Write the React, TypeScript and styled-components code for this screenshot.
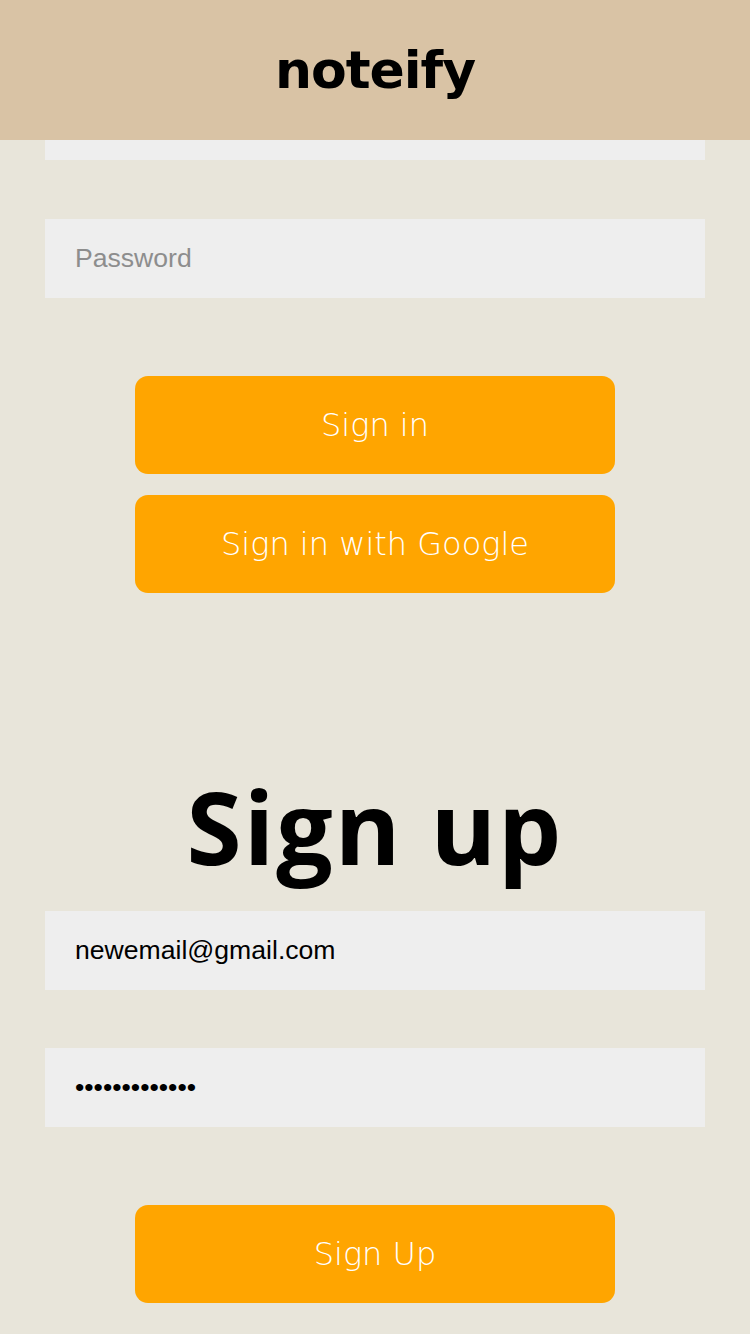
import React from "react";
import styled, { createGlobalStyle } from "styled-components";

const Global = createGlobalStyle`
  html, body { margin: 0; padding: 0; }
  body { background: #e8e5da; font-family: "DejaVu Sans", sans-serif; }
  * { box-sizing: border-box; }
`;

const Header = styled.header`
  position: fixed;
  top: 0;
  left: 0;
  right: 0;
  height: 140px;
  background: #d9c3a5;
  display: flex;
  align-items: center;
  justify-content: center;
  z-index: 10;
`;

const Logo = styled.h1`
  margin: 0;
  font-family: "DejaVu Sans", sans-serif;
  font-weight: 700;
  font-size: 52px;
  letter-spacing: -1px;
  color: #000;
`;

const Main = styled.main`
  width: 660px;
  margin: 0 auto;
  padding-top: 81px;
  display: flex;
  flex-direction: column;
`;

const Form = styled.form`
  display: flex;
  flex-direction: column;
  align-items: stretch;
`;

const Field = styled.input<{ $gap: number }>`
  display: block;
  width: 100%;
  height: 79px;
  border: none;
  outline: none;
  background: #eeeeee;
  padding: 0 30px;
  margin: 0 0 ${(p) => p.$gap}px;
  font-family: "Liberation Sans", Arial, sans-serif;
  font-size: 26.6px;
  color: #000;
  &::placeholder { color: #8d8d8d; }
`;

const Button = styled.button<{ $gap?: number }>`
  display: block;
  align-self: center;
  width: 480px;
  height: 98px;
  margin: 0 0 ${(p) => p.$gap ?? 0}px;
  border: none;
  border-radius: 13px;
  background: #ffa500;
  color: #fff;
  font-family: "DejaVu Sans", sans-serif;
  font-weight: 300;
  font-size: 32px;
  cursor: pointer;
`;

const Heading = styled.h2`
  margin: 168px 0 0;
  height: 150px;
  padding-bottom: 20px;
  display: flex;
  align-items: center;
  justify-content: center;
  font-family: "Open Sans", sans-serif;
  font-weight: 700;
  font-size: 100px;
  letter-spacing: 2px;
  color: #000;
`;

export default function App() {
  return (
    <>
      <Global />
      <Header>
        <Logo>noteify</Logo>
      </Header>
      <Main>
        <Form onSubmit={(e) => e.preventDefault()}>
          <Field $gap={59} type="email" placeholder="Email" readOnly />
          <Field $gap={78} type="password" placeholder="Password" readOnly />
          <Button type="submit" $gap={21}>Sign in</Button>
          <Button type="button">Sign in with Google</Button>
        </Form>
        <Heading>Sign up</Heading>
        <Form onSubmit={(e) => e.preventDefault()}>
          <Field $gap={58} type="email" value="newemail@gmail.com" readOnly />
          <Field $gap={78} type="password" value="1234567890123" readOnly />
          <Button type="submit" $gap={30}>Sign Up</Button>
        </Form>
      </Main>
    </>
  );
}
